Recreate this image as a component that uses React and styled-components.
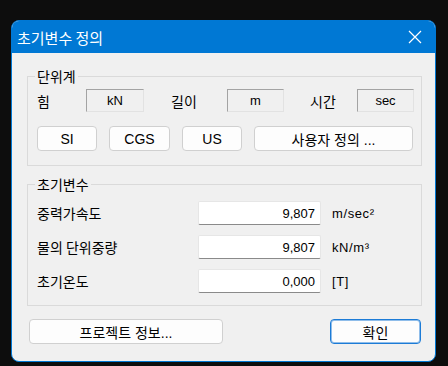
import React from "react";
import styled, { createGlobalStyle } from "styled-components";

const Global = createGlobalStyle`
  html, body { margin: 0; padding: 0; background: #0d0d0d; }
  body { font-family: "Liberation Sans", "Noto Sans CJK KR", sans-serif; }
  * { box-sizing: border-box; }
`;

const Page = styled.div`
  width: 448px;
  height: 366px;
  padding: 20px 0 0 11px;
`;

const Dialog = styled.div`
  width: 425px;
  height: 342px;
  border: 1px solid #0078d4;
  border-radius: 8px;
  overflow: hidden;
  background: #f0f0f0;
  display: flex;
  flex-direction: column;
`;

const TitleBar = styled.div`
  height: 32px;
  background: #0078d4;
  display: flex;
  align-items: center;
  justify-content: space-between;
  padding: 0 13px 0 5px;
  color: #fff;
  font-family: "Noto Sans CJK KR", sans-serif;
  font-size: 15px;
`;

const Close = styled.svg`
  width: 14px;
  height: 14px;
  display: block;
`;

const Body = styled.div`
  flex: 1;
  padding: 14px 13px 0 15px;
  display: flex;
  flex-direction: column;
`;

const Group = styled.fieldset`
  margin: 0 0 ${(p) => p.$mb || 0}px 0;
  border: 1px solid #dadada;
  padding: ${(p) => p.$pt}px 0 ${(p) => p.$pb}px 9px;
  min-width: 0;
  display: flex;
  flex-direction: column;
  gap: ${(p) => p.$gap}px;
`;

const Legend = styled.legend`
  margin-left: -2px;
  padding: 0 2px;
  font-family: "Noto Sans CJK KR", sans-serif;
  font-size: 14px;
  line-height: 18px;
  color: #000;
`;

const Row = styled.div`
  display: flex;
  align-items: center;
  height: ${(p) => p.$h}px;
`;

const Label = styled.span`
  width: ${(p) => p.$w}px;
  padding-left: ${(p) => p.$pl || 0}px;
  font-family: "Noto Sans CJK KR", sans-serif;
  font-size: 14px;
  color: #000;
  white-space: nowrap;
  flex-shrink: 0;
`;

const UnitBox = styled.div`
  width: ${(p) => p.$w}px;
  height: 23px;
  border-top: 1px solid #a3a3a3;
  border-left: 1px solid #a3a3a3;
  border-right: 1px solid #e2e2e2;
  border-bottom: 1px solid #e2e2e2;
  background: #f0f0f0;
  display: flex;
  align-items: center;
  justify-content: center;
  font-size: 13px;
  color: #000;
  flex-shrink: 0;
`;

const Btn = styled.button`
  width: ${(p) => p.$w}px;
  height: 25px;
  margin: 0 ${(p) => p.$mr || 0}px 0 ${(p) => p.$ml || 0}px;
  padding: 0;
  background: #fdfdfd;
  border: 1px solid ${(p) => (p.$primary ? "#1c7bd6" : "#d0d0d0")};
  box-shadow: ${(p) => (p.$primary ? "inset 0 0 0 1px #8fbdea" : "none")};
  border-radius: 4px;
  font-family: "Liberation Sans", "Noto Sans CJK KR", sans-serif;
  font-size: 14px;
  color: #000;
  flex-shrink: 0;
`;

const Input = styled.div`
  width: 123px;
  height: 24px;
  background: #fff;
  border: 1px solid #e6e6e6;
  border-bottom: 1px solid #8a8a8a;
  border-radius: 2px;
  display: flex;
  align-items: center;
  justify-content: flex-end;
  padding-right: 5px;
  font-size: 13px;
  color: #000;
  flex-shrink: 0;
`;

const Unit = styled.span`
  margin-left: 11px;
  font-size: 13px;
  letter-spacing: 0.6px;
  color: #000;
`;

const Footer = styled.div`
  display: flex;
  justify-content: space-between;
  padding: 0 1px 0 2px;
`;

const params = [
  { label: "중력가속도", value: "9,807", unit: "m/sec²" },
  { label: "물의 단위중량", value: "9,807", unit: "kN/m³" },
  { label: "초기온도", value: "0,000", unit: "[T]" },
];

export default function App() {
  return (
    <>
      <Global />
      <Page>
        <Dialog>
          <TitleBar>
            <span>초기변수 정의</span>
            <Close viewBox="0 0 14 14">
              <path d="M1 1 L13 13 M13 1 L1 13" stroke="#fff" strokeWidth="1.2" fill="none" />
            </Close>
          </TitleBar>
          <Body>
            <Group $pt={4} $pb={14} $gap={14} $mb={9}>
              <Legend>단위계</Legend>
              <Row $h={23}>
                <Label $w={49}>힘</Label>
                <UnitBox $w={58}>kN</UnitBox>
                <Label $w={83} $pl={27}>길이</Label>
                <UnitBox $w={57}>m</UnitBox>
                <Label $w={73} $pl={26}>시간</Label>
                <UnitBox $w={57}>sec</UnitBox>
              </Row>
              <Row $h={25}>
                <Btn $w={60} $mr={12}>SI</Btn>
                <Btn $w={61} $mr={12}>CGS</Btn>
                <Btn $w={60} $mr={12}>US</Btn>
                <Btn $w={159}>사용자 정의 ...</Btn>
              </Row>
            </Group>
            <Group $pt={8} $pb={12} $gap={10} $mb={13}>
              <Legend>초기변수</Legend>
              {params.map((p) => (
                <Row $h={24} key={p.label}>
                  <Label $w={161}>{p.label}</Label>
                  <Input>{p.value}</Input>
                  <Unit>{p.unit}</Unit>
                </Row>
              ))}
            </Group>
            <Footer>
              <Btn $w={194}>프로젝트 정보...</Btn>
              <Btn $w={91} $primary>확인</Btn>
            </Footer>
          </Body>
        </Dialog>
      </Page>
    </>
  );
}
